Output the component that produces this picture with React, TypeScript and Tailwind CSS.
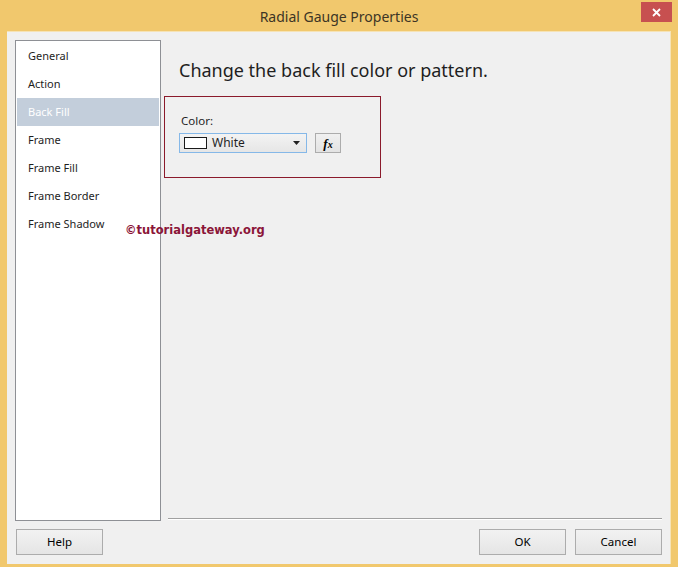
import React from "react";

const items = ["General", "Action", "Back Fill", "Frame", "Frame Fill", "Frame Border", "Frame Shadow"];

export default function App() {
  return (
    <div
      className="relative w-[678px] h-[567px] bg-[#f1c86d] flex flex-col overflow-hidden"
      style={{ fontFamily: '"Noto Sans", "Open Sans", sans-serif' }}
    >
      {/* title bar */}
      <div className="flex h-[31px] shrink-0">
        <div className="w-[37px]" />
        <div className="flex-1 flex items-center justify-center text-[14px] text-[#3d3525] pt-[1px]">
          Radial Gauge Properties
        </div>
        <div className="w-[37px] pt-[2px]">
          <div className="w-[31px] h-[20px] bg-[#c75050] flex items-center justify-center">
            <svg width="9" height="9" viewBox="0 0 9 9">
              <path d="M1 1 L8 8 M8 1 L1 8" stroke="#ffffff" strokeWidth="1.8" />
            </svg>
          </div>
        </div>
      </div>

      {/* client */}
      <div className="ml-[7px] mr-[7px] mb-[3px] flex-1 bg-[#f0f0f0] border-t border-r border-[#f6e3b5] flex flex-col pl-[8px] pr-[8px] pt-[8px] pb-[9px]">
        <div className="flex h-[481px]">
          <div className="w-[146px] h-[481px] bg-white border border-[#8e9095] p-[1px] flex flex-col">
            {items.map((it) => (
              <div
                key={it}
                className={
                  "h-[28px] flex items-center pl-[11px] text-[11px] " +
                  (it === "Back Fill" ? "bg-[#c3cedb] text-white" : "text-[#1e1e1e]")
                }
              >
                {it}
              </div>
            ))}
          </div>
          <div className="ml-[7px] w-[494px] flex flex-col">
            <div className="ml-[11px] mt-[18px] h-[24px] flex items-center text-[18px] text-[#1e1e1e]">
              Change the back fill color or pattern.
            </div>
            <div className="-ml-[4px] mt-[14px] w-[217px] h-[82px] border border-[#8b1a2b] pl-[14px] pt-[16px]">
              <div className="ml-[2px] h-[16px] flex items-center text-[11.5px] text-[#1e1e1e]">Color:</div>
              <div className="mt-[4px] flex items-center">
                <div className="w-[128px] h-[20px] border border-[#85b8e8] bg-gradient-to-b from-[#f3f3f3] to-[#e6e6e6] flex items-center pl-[4px] pr-[6px]">
                  <div className="w-[23px] h-[12px] border border-[#1a1a1a] bg-white" />
                  <div className="ml-[5px] text-[12px] text-[#1e1e1e] flex-1">White</div>
                  <svg width="7" height="4" viewBox="0 0 7 4">
                    <path d="M0 0 L7 0 L3.5 4 Z" fill="#222" />
                  </svg>
                </div>
                <div className="ml-[8px] w-[26px] h-[20px] border border-[#acacac] bg-gradient-to-b from-[#f0f0f0] to-[#e3e3e3] flex items-center justify-center">
                  <span
                    className="text-[13px] font-bold italic text-black leading-none"
                    style={{ fontFamily: '"Liberation Serif", serif' }}
                  >
                    f<span className="text-[10px]">x</span>
                  </span>
                </div>
              </div>
            </div>
            <div className="mt-auto mb-[1px] h-[2px] border-t border-t-[#a0a0a0] border-b border-b-white" />
          </div>
        </div>
        <div className="mt-[8px] flex items-center">
          <button className="ml-[1px] w-[87px] h-[26px] border border-[#acacac] bg-gradient-to-b from-[#f2f2f2] to-[#e5e5e5] text-[11.5px] text-black">
            Help
          </button>
          <div className="flex-1" />
          <button className="w-[87px] h-[26px] border border-[#acacac] bg-gradient-to-b from-[#f2f2f2] to-[#e5e5e5] text-[11.5px] text-black">
            OK
          </button>
          <button className="ml-[9px] w-[87px] h-[26px] border border-[#acacac] bg-gradient-to-b from-[#f2f2f2] to-[#e5e5e5] text-[11.5px] text-black">
            Cancel
          </button>
        </div>
      </div>

      {/* watermark */}
      <div
        className="absolute left-[125px] top-[222px] text-[11.5px] font-bold text-[#8b1538]"
        style={{ fontFamily: '"DejaVu Sans", Verdana, sans-serif' }}
      >
        ©tutorialgateway.org
      </div>
    </div>
  );
}
